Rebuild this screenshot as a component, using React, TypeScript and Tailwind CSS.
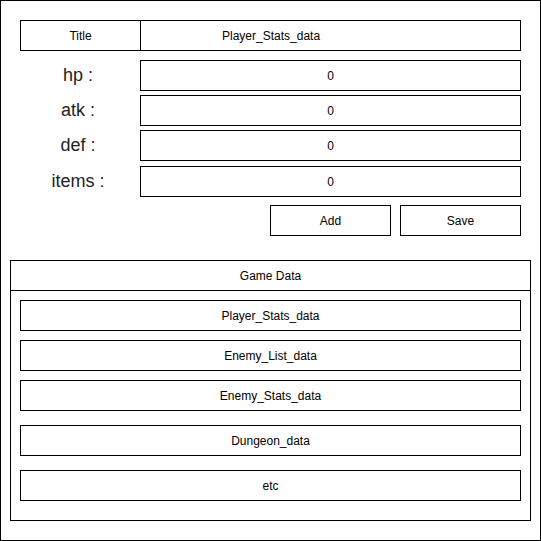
const stats = [
  { label: "hp :", mt: "mt-[9px]" },
  { label: "atk :", mt: "mt-[4px]" },
  { label: "def :", mt: "mt-[4px]" },
  { label: "items :", mt: "mt-[5px]" },
];

const dataRows = [
  { name: "Player_Stats_data", mt: "mt-[9px]" },
  { name: "Enemy_List_data", mt: "mt-[9px]" },
  { name: "Enemy_Stats_data", mt: "mt-[9px]" },
  { name: "Dungeon_data", mt: "mt-[14px]" },
  { name: "etc", mt: "mt-[14px]" },
];

const App = () => {
  return (
    <div
      className="flex h-[541px] w-[541px] flex-col border border-black bg-white text-black"
      style={{ fontFamily: '"Liberation Sans", Arial, sans-serif' }}
    >
      <section className="flex flex-col px-[19px] pt-[19px]">
        <div className="flex h-[31px] border border-black text-[12px]">
          <div className="flex w-[120px] items-center justify-center border-r border-black">
            Title
          </div>
          <div className="flex flex-1 items-center pl-[81px]">Player_Stats_data</div>
        </div>

        {stats.map((s) => (
          <div key={s.label} className={`flex h-[31px] ${s.mt}`}>
            <div className="flex w-[120px] items-center justify-center pr-[4px] text-[18px] text-[#222]">
              {s.label}
            </div>
            <div className="flex flex-1 items-center justify-center border border-black text-[12px]">
              0
            </div>
          </div>
        ))}

        <div className="mt-[8px] flex justify-end gap-[9px] text-[12px]">
          <button className="flex h-[31px] w-[121px] items-center justify-center border border-black">
            Add
          </button>
          <button className="flex h-[31px] w-[121px] items-center justify-center border border-black">
            Save
          </button>
        </div>
      </section>

      <section className="mx-[9px] mt-[24px] flex h-[261px] flex-col border border-black text-[12px]">
        <div className="flex h-[30px] items-center justify-center border-b border-black">
          Game Data
        </div>
        <div className="flex flex-col px-[9px]">
          {dataRows.map((r) => (
            <div
              key={r.name}
              className={`flex h-[31px] items-center justify-center border border-black ${r.mt}`}
            >
              {r.name}
            </div>
          ))}
        </div>
      </section>
    </div>
  );
};

export default App;
